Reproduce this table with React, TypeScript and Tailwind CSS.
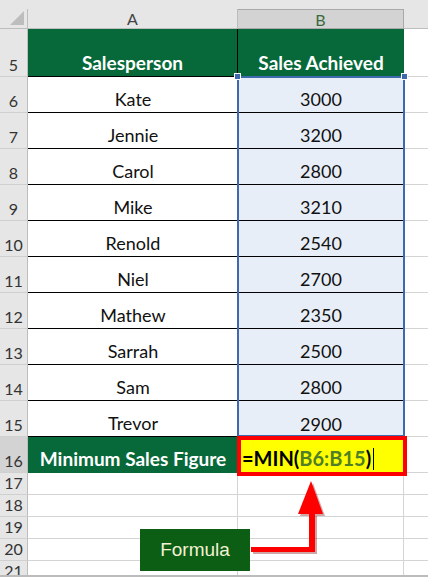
const rows = [
  { n: 6, name: "Kate", sales: 3000 },
  { n: 7, name: "Jennie", sales: 3200 },
  { n: 8, name: "Carol", sales: 2800 },
  { n: 9, name: "Mike", sales: 3210 },
  { n: 10, name: "Renold", sales: 2540 },
  { n: 11, name: "Niel", sales: 2700 },
  { n: 12, name: "Mathew", sales: 2350 },
  { n: 13, name: "Sarrah", sales: 2500 },
  { n: 14, name: "Sam", sales: 2800 },
  { n: 15, name: "Trevor", sales: 2900 },
];

function RowNum({ n, active }: { n: number; active?: boolean }) {
  return (
    <div
      className={`flex w-[28px] shrink-0 items-end justify-center border-r border-b border-r-[#bdbdbd] border-b-[#d0d0d0] pb-[1px] text-[16px] leading-[20px] text-[#333] ${
        active ? "bg-[#d3d3d3]" : "bg-[#e6e6e6]"
      }`}
    >
      {n}
    </div>
  );
}

export default function App() {
  return (
    <div className="relative flex h-[577px] w-[428px] flex-col overflow-hidden border-b-2 border-[#bcbcbc] bg-white font-['Lato',sans-serif]">
      {/* top strip */}
      <div className="h-[9px] shrink-0 bg-[#e6e6e6]" />

      {/* column headers */}
      <div className="flex h-[20px] shrink-0 bg-[#e6e6e6] text-[16px] leading-[20px] text-[#444]">
        <div className="relative w-[28px] shrink-0 border-r border-b border-[#bdbdbd]">
          <svg className="absolute right-[3px] bottom-[3px]" width="14" height="14" viewBox="0 0 14 14">
            <polygon points="14,0 14,14 0,14" fill="#bdbdbd" />
          </svg>
        </div>
        <div className="flex w-[210px] shrink-0 justify-center border-r border-b border-[#bdbdbd]">A</div>
        <div className="flex w-[166px] shrink-0 justify-center border-r border-b border-t border-[#a9a9a9] bg-[#d3d3d3] text-[#3b6b3b]">
          B
        </div>
        <div className="flex-1 border-b border-[#bdbdbd]" />
      </div>

      {/* row 5 header */}
      <div className="flex h-[48px] shrink-0">
        <RowNum n={5} />
        <div className="flex w-[210px] shrink-0 items-end justify-center border-r border-b border-r-black border-b-black bg-[#07693a] text-[19px] font-bold leading-[26px] text-white">
          Salesperson
        </div>
        <div className="flex w-[166px] shrink-0 items-end justify-center border-b border-black bg-[#07693a] text-[19px] font-bold leading-[26px] text-white">
          Sales Achieved
        </div>
        <div className="flex-1 border-b border-[#d4d4d4]" />
      </div>

      {/* data rows */}
      {rows.map((r) => (
        <div key={r.n} className="flex h-[36px] shrink-0">
          <RowNum n={r.n} />
          <div className="flex w-[210px] shrink-0 items-end justify-center border-b border-black pb-[1px] text-[18px] leading-[24px] text-[#111]">
            {r.name}
          </div>
          <div
            className={`flex w-[166px] shrink-0 items-end justify-center bg-[#e8eef8] pb-[1px] text-[18px] leading-[24px] text-[#111] ${
              r.n < 15 ? "border-b border-black" : ""
            }`}
          >
            {r.sales}
          </div>
          <div className="flex-1 border-b border-[#d4d4d4]" />
        </div>
      ))}

      {/* row 16 */}
      <div className="flex h-[36px] shrink-0">
        <RowNum n={16} active />
        <div className="flex w-[210px] shrink-0 items-end justify-center bg-[#07693a] pb-[1px] text-[19px] font-bold leading-[26px] text-white">
          Minimum Sales Figure
        </div>
        <div className="flex w-[166px] shrink-0 items-end bg-[#ffff00] pb-[2px] pl-[4px] text-[20px] font-bold leading-[26px] text-black">
          =MIN(<span className="text-[#4f7f26]">B6:B15</span>)
          <span className="mb-[1px] ml-[2px] inline-block h-[22px] w-[1px] bg-black" />
        </div>
        <div className="flex-1 border-b border-[#d4d4d4]" />
      </div>

      {/* empty rows */}
      {[17, 18, 19, 20, 21].map((n) => (
        <div key={n} className="flex h-[22px] shrink-0">
          <RowNum n={n} />
          <div className="w-[210px] shrink-0 border-r border-b border-[#d4d4d4]" />
          <div className="w-[166px] shrink-0 border-r border-b border-[#d4d4d4]" />
          <div className="flex-1 border-b border-[#d4d4d4]" />
        </div>
      ))}

      {/* selection outline B6:B15 */}
      <div className="pointer-events-none absolute top-[76px] left-[237px] h-[361px] w-[168px] border-2 border-[#3f69ad]" />
      <div className="absolute top-[73px] left-[234px] h-[7px] w-[7px] border border-white bg-[#3f69ad]" />
      <div className="absolute top-[73px] left-[401px] h-[7px] w-[7px] border border-white bg-[#3f69ad]" />

      {/* red box on formula cell */}
      <div className="pointer-events-none absolute top-[436px] left-[237px] h-[40px] w-[170px] border-4 border-[#ff0000]" />

      {/* Formula label */}
      <div className="absolute top-[529px] left-[140px] flex h-[42px] w-[110px] items-center justify-center bg-[#0b5e13] pt-[1px] font-['Liberation_Sans',sans-serif] text-[19px] text-[#f3f1d6]">
        Formula
      </div>

      {/* arrow */}
      <svg className="pointer-events-none absolute top-0 left-0" width="428" height="577" viewBox="0 0 428 577">
        <g fill="#7a0000" opacity="0.35" transform="translate(2,2)">
          <rect x="251" y="547" width="64" height="5" />
          <rect x="309" y="511" width="6" height="41" />
          <polygon points="298,514 323,514 311,481" />
        </g>
        <g fill="#ff0000">
          <rect x="251" y="547" width="64" height="5" />
          <rect x="309" y="511" width="6" height="41" />
          <polygon points="298,514 323,514 311,481" />
        </g>
      </svg>
    </div>
  );
}
